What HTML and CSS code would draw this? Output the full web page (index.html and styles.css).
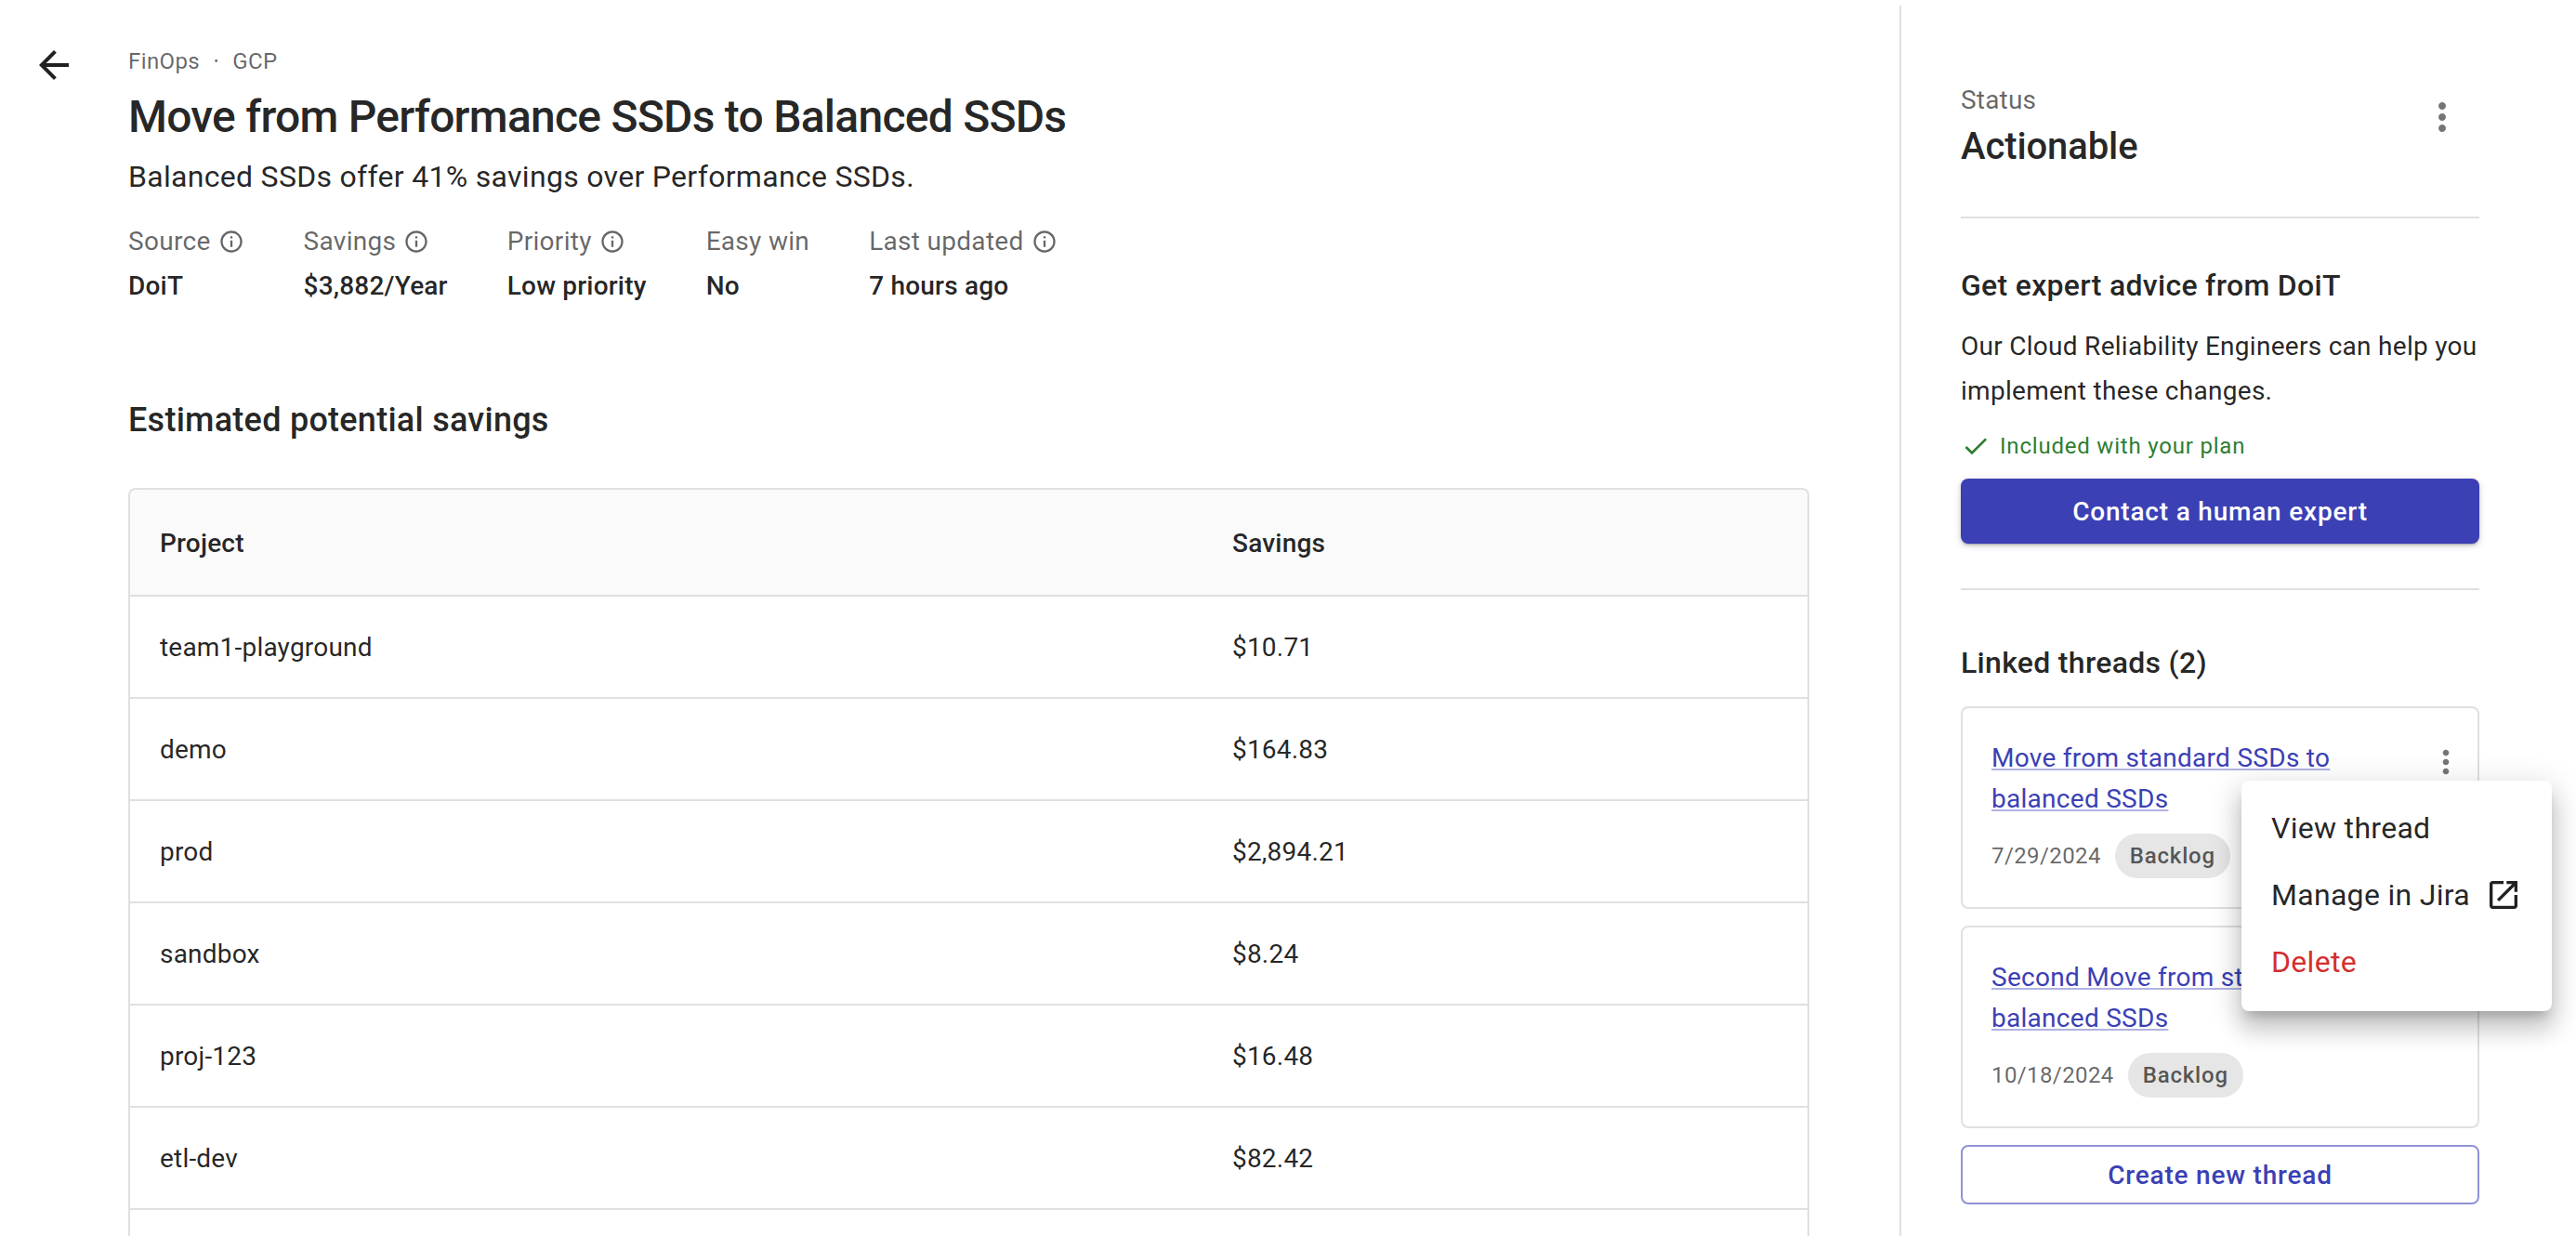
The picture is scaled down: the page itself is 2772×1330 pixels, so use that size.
FILE: index.html
```html
<!DOCTYPE html>
<html lang="en">
<head>
  <meta charset="UTF-8">
  <title>Move from Performance SSDs to Balanced SSDs</title>
  <link rel="stylesheet" href="styles.css">
</head>
<body>

  <div class="page">
    <main class="main">
      <svg class="back" viewBox="0 0 24 24"><path d="M20 11H7.83l5.59-5.59L12 4l-8 8 8 8 1.41-1.41L7.83 13H20v-2z"/></svg>

      <div class="content">
        <div class="crumbs"><span>FinOps</span><span class="dot">•</span><span>GCP</span></div>
        <h1>Move from Performance SSDs to Balanced SSDs</h1>
        <p class="subtitle">Balanced SSDs offer 41% savings over Performance SSDs.</p>

        <div class="meta">
          <div>
            <div class="meta-label">Source <svg class="info" viewBox="0 0 24 24"><path d="M11 7h2v2h-2zm0 4h2v6h-2zm1-9C6.48 2 2 6.48 2 12s4.48 10 10 10 10-4.48 10-10S17.52 2 12 2zm0 18c-4.41 0-8-3.59-8-8s3.59-8 8-8 8 3.59 8 8-3.59 8-8 8z"/></svg></div>
            <div class="meta-value">DoiT</div>
          </div>
          <div>
            <div class="meta-label">Savings <svg class="info" viewBox="0 0 24 24"><path d="M11 7h2v2h-2zm0 4h2v6h-2zm1-9C6.48 2 2 6.48 2 12s4.48 10 10 10 10-4.48 10-10S17.52 2 12 2zm0 18c-4.41 0-8-3.59-8-8s3.59-8 8-8 8 3.59 8 8-3.59 8-8 8z"/></svg></div>
            <div class="meta-value">$3,882/Year</div>
          </div>
          <div>
            <div class="meta-label">Priority <svg class="info" viewBox="0 0 24 24"><path d="M11 7h2v2h-2zm0 4h2v6h-2zm1-9C6.48 2 2 6.48 2 12s4.48 10 10 10 10-4.48 10-10S17.52 2 12 2zm0 18c-4.41 0-8-3.59-8-8s3.59-8 8-8 8 3.59 8 8-3.59 8-8 8z"/></svg></div>
            <div class="meta-value">Low priority</div>
          </div>
          <div>
            <div class="meta-label">Easy win</div>
            <div class="meta-value">No</div>
          </div>
          <div>
            <div class="meta-label">Last updated <svg class="info" viewBox="0 0 24 24"><path d="M11 7h2v2h-2zm0 4h2v6h-2zm1-9C6.48 2 2 6.48 2 12s4.48 10 10 10 10-4.48 10-10S17.52 2 12 2zm0 18c-4.41 0-8-3.59-8-8s3.59-8 8-8 8 3.59 8 8-3.59 8-8 8z"/></svg></div>
            <div class="meta-value">7 hours ago</div>
          </div>
        </div>

        <h2>Estimated potential savings</h2>

        <div class="table">
          <div class="row head"><div>Project</div><div>Savings</div></div>
          <div class="row"><div>team1-playground</div><div>$10.71</div></div>
          <div class="row"><div>demo</div><div>$164.83</div></div>
          <div class="row"><div>prod</div><div>$2,894.21</div></div>
          <div class="row"><div>sandbox</div><div>$8.24</div></div>
          <div class="row"><div>proj-123</div><div>$16.48</div></div>
          <div class="row"><div>etl-dev</div><div>$82.42</div></div>
          <div class="row"><div></div><div></div></div>
        </div>
      </div>
    </main>

    <aside class="side">
      <div class="status">
        <div>
          <div class="status-label">Status</div>
          <div class="status-value">Actionable</div>
        </div>
        <svg class="more" viewBox="0 0 24 24"><path d="M12 8c1.1 0 2-.9 2-2s-.9-2-2-2-2 .9-2 2 .9 2 2 2zm0 2c-1.100 0-2 .9-2 2s.9 2 2 2 2-.9 2-2-.9-2-2-2zm0 6c-1.100 0-2 .9-2 2s.9 2 2 2 2-.9 2-2-.9-2-2-2z"/></svg>
      </div>

      <div class="advice">
        <h3>Get expert advice from DoiT</h3>
        <p>Our Cloud Reliability Engineers can help you implement these changes.</p>
        <div class="included">
          <svg viewBox="0 0 24 24"><path d="M9 16.17 4.83 12l-1.42 1.41L9 19 21 7l-1.41-1.41z"/></svg>
          Included with your plan
        </div>
        <button class="btn-primary">Contact a human expert</button>
      </div>

      <h3 class="threads-title">Linked threads (2)</h3>

      <div class="thread">
        <div class="thread-top">
          <a href="#">Move from standard SSDs to balanced SSDs</a>
          <svg class="more small" viewBox="0 0 24 24"><path d="M12 8c1.100 0 2-.9 2-2s-.9-2-2-2-2 .9-2 2 .9 2 2 2zm0 2c-1.100 0-2 .9-2 2s.9 2 2 2 2-.9 2-2-.9-2-2-2zm0 6c-1.100 0-2 .9-2 2s.9 2 2 2 2-.9 2-2-.9-2-2-2z"/></svg>
        </div>
        <div class="thread-info"><span class="date">7/29/2024</span><span class="chip">Backlog</span></div>
      </div>

      <div class="thread">
        <div class="thread-top">
          <a href="#">Second Move from standard SSDs to balanced SSDs</a>
        </div>
        <div class="thread-info"><span class="date">10/18/2024</span><span class="chip">Backlog</span></div>
      </div>

      <button class="btn-outline">Create new thread</button>

      <ul class="menu">
        <li>View thread</li>
        <li>Manage in Jira <svg viewBox="0 0 24 24"><path d="M19 19H5V5h7V3H5c-1.110 0-2 .9-2 2v14c0 1.100.89 2 2 2h14c1.100 0 2-.9 2-2v-7h-2v7zM14 3v2h3.590l-9.830 9.830 1.410 1.410L19 6.410V10h2V3h-7z"/></svg></li>
        <li class="danger">Delete</li>
      </ul>
    </aside>
  </div>

</body>
</html>
```

FILE: styles.css
```css
html, body {
  margin: 0;
  height: 100%;
  overflow: hidden;
}

body {
  font-family: 'Roboto', sans-serif;
  color: rgba(0,0,0,0.87);
  background: white;
}

.page {
  display: flex;
  height: 1330px;
}

.main {
  width: 2044px;
  flex: none;
  display: flex;
  padding: 46px 97px 0 34px;
  box-sizing: border-box;
}

.back {
  width: 48px;
  height: 48px;
  flex: none;
  margin-right: 56px;
  fill: rgba(0,0,0,0.87);
}

.content {
  flex: 1;
  min-width: 0;
}

.crumbs {
  font-size: 24px;
  line-height: 40px;
  letter-spacing: 0.4px;
  color: rgba(0,0,0,0.6);
  display: flex;
  gap: 15px;
}

.crumbs .dot {
  font-size: 14px;
}

h1 {
  font-size: 48px;
  font-weight: 500;
  line-height: 64px;
  letter-spacing: -0.75px;
  margin: 8px 0 0;
}

.subtitle {
  font-size: 32px;
  line-height: 48px;
  letter-spacing: 0.3px;
  margin: 8px 0 0;
}

.meta {
  display: flex;
  gap: 64px;
  margin-top: 26px;
}

.meta-label {
  font-size: 28px;
  line-height: 40px;
  color: rgba(0,0,0,0.6);
  display: flex;
  align-items: center;
  gap: 8px;
  white-space: nowrap;
  letter-spacing: 0.3px;
}

.info {
  width: 28px;
  height: 28px;
  fill: rgba(0,0,0,0.6);
}

.meta-value {
  font-size: 28px;
  font-weight: 500;
  line-height: 40px;
  letter-spacing: 0.2px;
  margin-top: 8px;
}

h2 {
  font-size: 36px;
  font-weight: 500;
  line-height: 48px;
  letter-spacing: 0.26px;
  margin: 100px 0 0;
}

.table {
  margin-top: 49px;
  border: 2px solid #e0e0e0;
  border-bottom: 0;
  border-radius: 8px 8px 0 0;
}

.row {
  display: grid;
  grid-template-columns: 1154px 1fr;
  height: 110px;
  box-sizing: border-box;
  border-bottom: 2px solid #e0e0e0;
  align-items: center;
  font-size: 28px;
  letter-spacing: 0.2px;
  padding-top: 1px;
}

.row div {
  padding-left: 32px;
}

.row.head {
  height: 115px;
  background: #fafafa;
  font-weight: 500;
  border-radius: 8px 8px 0 0;
}

.side {
  position: relative;
  width: 624px;
  flex: none;
  margin-top: 6px;
  padding: 82px 0 0 64px;
  box-sizing: content-box;
  border-left: 2px solid #e0e0e0;
}

.status {
  display: flex;
  justify-content: space-between;
  height: 147px;
  width: 558px;
  box-sizing: border-box;
  border-bottom: 2px solid #e0e0e0;
}

.status-label {
  font-size: 28px;
  line-height: 40px;
  letter-spacing: 0.2px;
  color: rgba(0,0,0,0.6);
}

.status-value {
  font-size: 40px;
  font-weight: 500;
  line-height: 56px;
  letter-spacing: -0.1px;
  margin-top: 2px;
}

.more {
  width: 48px;
  height: 48px;
  fill: rgba(0,0,0,0.54);
  margin: 14px 16px 0 0;
  flex: none;
}

.more.small {
  width: 40px;
  height: 40px;
  margin: 6px -17px 0 0;
}

h3 {
  font-size: 32px;
  font-weight: 500;
  line-height: 48px;
  letter-spacing: 0.3px;
  margin: 0;
}

.advice {
  width: 558px;
  padding-top: 48px;
  height: 400px;
  box-sizing: border-box;
  border-bottom: 2px solid #e0e0e0;
}

.advice p {
  font-size: 28px;
  line-height: 48px;
  letter-spacing: 0.28px;
  margin: 18px 0 0;
}

.included {
  display: flex;
  align-items: center;
  gap: 10px;
  font-size: 24px;
  letter-spacing: 0.8px;
  line-height: 32px;
  color: #2e7d32;
  margin-top: 19px;
}

.included svg {
  width: 32px;
  height: 32px;
  fill: #2e7d32;
}

.btn-primary {
  display: block;
  width: 558px;
  height: 70px;
  margin-top: 19px;
  background: #3b40b5;
  color: white;
  border: 0;
  border-radius: 8px;
  font-family: inherit;
  font-size: 28px;
  font-weight: 500;
  letter-spacing: 0.8px;
  box-shadow: 0 3px 2px -2px rgba(0,0,0,0.2), 0 2px 4px 0 rgba(0,0,0,0.14), 0 2px 10px 0 rgba(0,0,0,0.12);
}

.threads-title {
  width: 558px;
  margin-top: 54px;
}

.thread {
  width: 558px;
  height: 218px;
  box-sizing: border-box;
  border: 2px solid #e0e0e0;
  border-radius: 8px;
  padding: 32px 31px 0;
  margin-top: 18px;
}

.threads-title + .thread {
  margin-top: 23px;
}

.thread-top {
  display: flex;
  justify-content: space-between;
  align-items: flex-start;
  gap: 40px;
  min-height: 88px;
}

.thread-top a {
  font-size: 28px;
  line-height: 44px;
  color: #3b40b5;
  text-decoration-color: rgba(59,64,181,0.4);
  letter-spacing: 0.28px;
}

.thread-info {
  display: flex;
  align-items: center;
  gap: 15px;
  margin-top: 15px;
}

.date {
  font-size: 24px;
  letter-spacing: 0.4px;
  color: rgba(0,0,0,0.6);
}

.chip {
  font-size: 24px;
  font-weight: 500;
  letter-spacing: 0.8px;
  line-height: 48px;
  padding: 0 16px;
  border-radius: 24px;
  background: #e6e6e6;
  color: rgba(0,0,0,0.65);
}

.btn-outline {
  display: block;
  width: 558px;
  height: 64px;
  margin-top: 18px;
  background: white;
  color: #3b40b5;
  border: 2px solid #8f92d8;
  border-radius: 8px;
  font-family: inherit;
  font-size: 28px;
  font-weight: 500;
  letter-spacing: 0.8px;
}

.menu {
  position: absolute;
  top: 834px;
  left: 366px;
  width: 334px;
  box-sizing: border-box;
  list-style: none;
  margin: 0;
  padding: 15px 0 17px;
  background: white;
  border-radius: 8px;
  box-shadow: 0 10px 12px -6px rgba(0,0,0,0.2), 0 20px 24px 2px rgba(0,0,0,0.14), 0 8px 32px 6px rgba(0,0,0,0.12);
}

.menu li {
  display: flex;
  align-items: center;
  height: 72px;
  padding: 0 32px;
  font-size: 32px;
  letter-spacing: 0.3px;
  gap: 16px;
  white-space: nowrap;
}

.menu svg {
  width: 40px;
  height: 40px;
  fill: rgba(0,0,0,0.87);
  flex: none;
}

.menu .danger {
  color: #d32f2f;
}
```
